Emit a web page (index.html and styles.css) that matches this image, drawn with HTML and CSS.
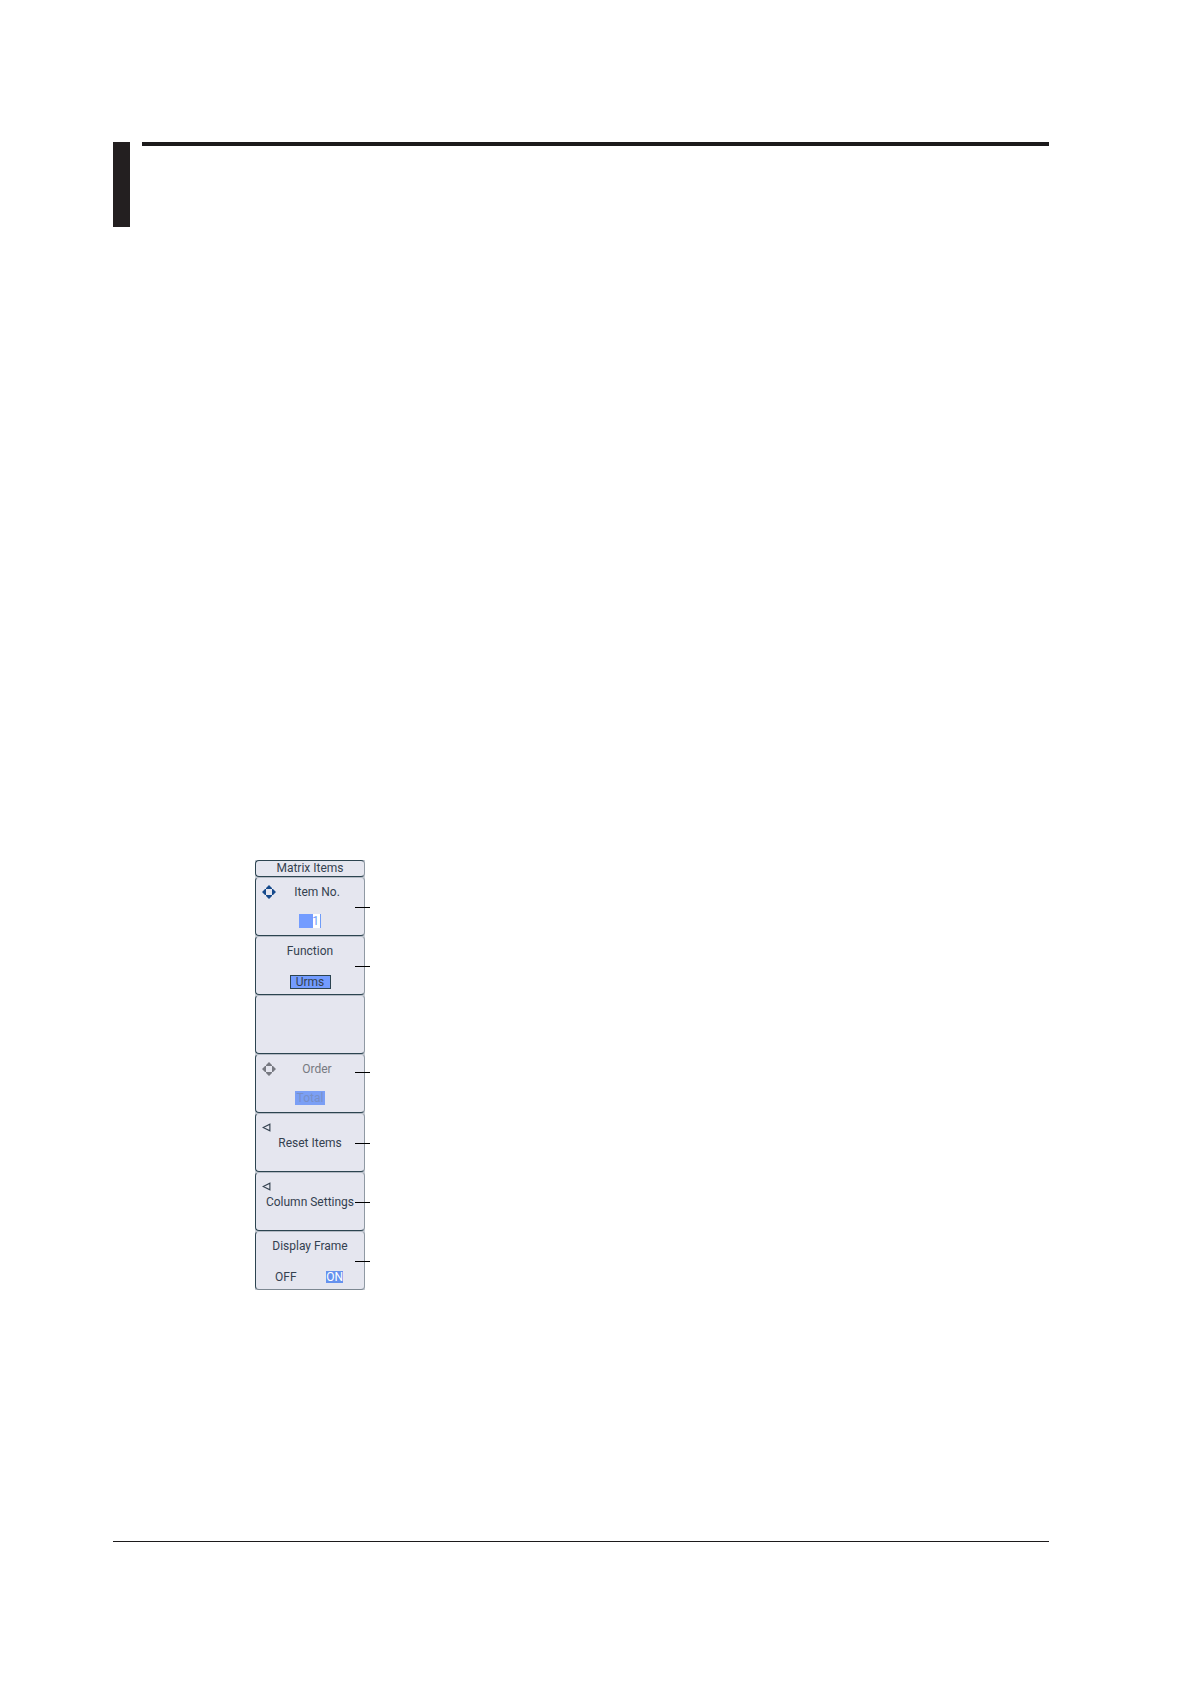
FILE: index.html
```
<!DOCTYPE html>
<html lang="en">
<head>
    <meta charset="UTF-8">
    <meta name="viewport" content="width=device-width, initial-scale=1.0">
    <title>Matrix Items</title>
    <link rel="stylesheet" href="styles.css">
</head>
<body>
    <div class="page">
        <header class="header">
            <div class="marker"></div>
            <div class="rule"></div>
        </header>

        <!-- Soft key menu -->
        <form class="menu">
            <h1 class="title">Matrix Items</h1>
            <div class="item callout">
                <svg class="cursor" viewBox="0 0 14 14">
                    <path class="ring" d="M3 5L5 3M9 3L11 5M11 9L9 11M5 11L3 9"/>
                    <path d="M7 0L10 3V4H4V3ZM7 14L4 11V10H10V11ZM0 7L3 4H4V10H3ZM14 7L11 10H10V4H11Z"/>
                    <path class="hole" d="M5 4H9L10 5V9L9 10H5L4 9V5Z"/>
                </svg>
                <label class="name shifted" for="itemNo">Item No.</label>
                <input class="number" type="text" id="itemNo" value="1">
            </div>
            <div class="item callout">
                <span class="name" id="functionName">Function</span>
                <button class="function" type="button" aria-describedby="functionName">Urms</button>
            </div>
            <div class="item"></div>
            <div class="item callout high disabled">
                <svg class="cursor" viewBox="0 0 14 14">
                    <path class="ring" d="M3 5L5 3M9 3L11 5M11 9L9 11M5 11L3 9"/>
                    <path d="M7 0L10 3V4H4V3ZM7 14L4 11V10H10V11ZM0 7L3 4H4V10H3ZM14 7L11 10H10V4H11Z"/>
                    <path class="hole" d="M5 4H9L10 5V9L9 10H5L4 9V5Z"/>
                </svg>
                <label class="name shifted" for="order">Order</label>
                <input class="order" type="text" id="order" value="Total" disabled>
            </div>
            <button class="item callout link" type="button">
                <svg class="arrow" viewBox="0 0 8 8"><path d="M7 1V7L1 4Z"/></svg>
                Reset Items
            </button>
            <button class="item callout link" type="button">
                <svg class="arrow" viewBox="0 0 8 8"><path d="M7 1V7L1 4Z"/></svg>
                Column Settings
            </button>
            <div class="item callout" role="radiogroup" aria-labelledby="frameName">
                <span class="name" id="frameName">Display Frame</span>
                <div class="options">
                    <label><input type="radio" name="frame"><span>OFF</span></label>
                    <label><input type="radio" name="frame" checked><span>ON</span></label>
                </div>
            </div>
        </form>

        <footer class="footer"></footer>
    </div>
</body>
</html>
```

FILE: styles.css
```
* {
    box-sizing: border-box;
}
body {
    margin: 0;
    background-color: #fff;
    color: #34414f;
    font-family: Roboto, "Liberation Sans", sans-serif;
    font-size: 12px;
    line-height: 14px;
}
input, button {
    margin: 0;
    padding: 0;
    border: none;
    border-radius: 0;
    color: inherit;
    font: inherit;
}
.page {
    display: flex;
    flex-direction: column;
    min-height: 100vh;
    padding: 142px 142px 142px 113px;
}
.header {
    display: flex;
    gap: 12px;
}
.marker {
    width: 17px;
    height: 85px;
    background-color: #231f20;
}
.rule {
    flex: 1;
    height: 4px;
    background-color: #1c1a1b;
}
.menu {
    width: 110px;
    margin: 633px 0 40px 142px;
    background-color: #c9ced6;
}
.title {
    height: 17px;
    margin: 0;
    border: 1px solid #2c4450;
    border-right-color: #8f99a3;
    border-radius: 4px;
    background-color: #e5e6ef;
    font-size: 12px;
    font-weight: normal;
    text-align: center;
}
.item {
    display: flex;
    flex-direction: column;
    align-items: center;
    position: relative;
    width: 100%;
    height: 59px;
    padding-top: 7px;
    border: 1px solid #2c4450;
    border-top-color: #b4bac4;
    border-right-color: #8f99a3;
    border-radius: 4px;
    background-color: #e5e6ef;
}
.item:last-child {
    border-bottom-color: #7c8791;
}
/* leader line to the right of a key */
.callout::after {
    content: "";
    position: absolute;
    top: 29px;
    right: -6px;
    width: 15px;
    height: 1px;
    background-color: #000;
}
.callout.high::after {
    top: 17px;
}
.shifted {
    padding-left: 14px;
}
.cursor {
    position: absolute;
    top: 7px;
    left: 6px;
    width: 14px;
    height: 14px;
    fill: #164a8c;
}
.cursor .ring {
    fill: none;
    stroke: #7795bd;
}
.cursor .hole {
    fill: #e5e6ef;
}
.disabled {
    color: #777981;
}
.disabled .cursor {
    fill: #777981;
}
.disabled .ring {
    stroke: #a5a6ad;
}
.number {
    width: 22px;
    height: 14px;
    margin-top: 15px;
    padding-right: 1px;
    border-right: 1px solid #6f9cf8;
    background: linear-gradient(to right, #739cff 14px, #fff 14px);
    color: #6f9cf8;
    text-align: right;
}
.function {
    width: 41px;
    height: 14px;
    margin-top: 17px;
    border: 1px solid #2c4450;
    background-color: #739cff;
    line-height: 12px;
}
.order {
    width: 30px;
    height: 14px;
    margin-top: 15px;
    background-color: #7b9ff5;
    color: #7890c8;
    text-align: center;
}
.link {
    justify-content: center;
    padding: 0;
}
.arrow {
    position: absolute;
    top: 9px;
    left: 6px;
    width: 9px;
    height: 9px;
    fill: none;
    stroke: #34414f;
}
.options {
    display: flex;
    justify-content: space-between;
    width: 100%;
    margin-top: 18px;
    padding: 0 21px 0 19px;
}
.options input {
    position: absolute;
    opacity: 0;
}
.options span {
    display: block;
    height: 12px;
    line-height: 12px;
}
.options input:checked + span {
    background-color: #6591ee;
    color: #fff;
}
.footer {
    margin-top: auto;
    border-top: 1px solid #1c1a1b;
}
```
